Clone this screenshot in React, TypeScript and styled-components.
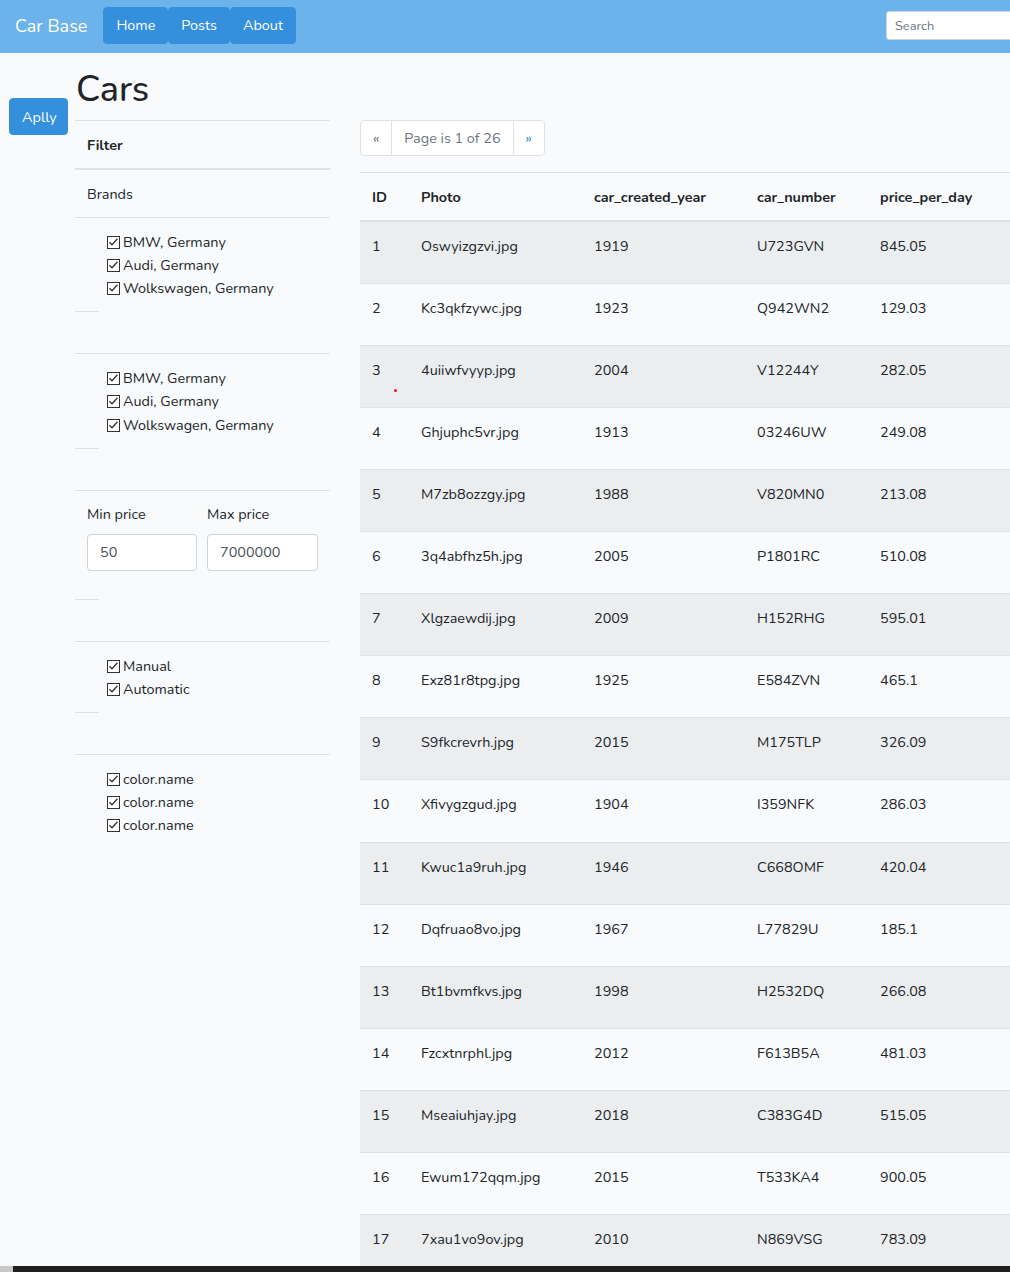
import React from "react";
import styled, { createGlobalStyle } from "styled-components";

const GlobalStyle = createGlobalStyle`
  html, body {
    margin: 0;
    padding: 0;
    overflow: hidden;
    background: #f8fafc;
  }
  body {
    font-family: "Nunito", "Lato", "Open Sans", sans-serif;
    font-size: 14.4px;
    line-height: 1.6;
    color: #212529;
  }
  * { box-sizing: border-box; }
`;

const Page = styled.div`
  width: 1102px;
  min-height: 1272px;
  background: #f8fafc;
`;

const Navbar = styled.nav`
  display: flex;
  align-items: center;
  height: 53px;
  padding: 7px 16px 9px 15px;
  background: #6cb2eb;
`;

const Brand = styled.a`
  font-size: 18px;
  line-height: 1.6;
  color: #fff;
  margin-right: 16px;
  padding-top: 1px;
  text-decoration: none;
`;

const NavGroup = styled.div`
  display: flex;
`;

const NavButton = styled.button`
  height: 37px;
  padding: 6px 12px;
  border: 1px solid #3490dc;
  border-radius: 4px;
  background: #3490dc;
  color: #fff;
  font: inherit;
  font-size: 14.4px;
  line-height: 23px;
`;

const SearchInput = styled.input`
  margin-left: auto;
  width: 200px;
  height: 29px;
  padding: 4px 8px;
  border: 1px solid #ced4da;
  border-radius: 3px;
  background: #fff;
  font: inherit;
  font-size: 12.8px;
  color: #495057;
  &::placeholder { color: #6c757d; }
`;

const Main = styled.div`
  display: flex;
  align-items: flex-start;
  padding-left: 9px;
`;

const ApplyCol = styled.div`
  width: 59px;
  padding-top: 45px;
  margin-right: 7px;
`;

const ApplyButton = styled.button`
  width: 59px;
  height: 37px;
  padding: 7px 12px 5px;
  border: 1px solid #3490dc;
  border-radius: 4px;
  background: #3490dc;
  color: #fff;
  font: inherit;
  font-size: 14.4px;
  line-height: 23px;
`;

const SideCol = styled.div`
  width: 255px;
  padding-top: 15px;
`;

const Title = styled.h1`
  margin: 0 0 9px 1px;
  font-size: 36px;
  font-weight: 500;
  line-height: 1.2;
`;

const FilterHead = styled.div`
  padding: 13px 12px 11px;
  border-top: 1px solid #dee2e6;
  border-bottom: 2px solid #dee2e6;
  font-weight: 700;
`;

const FilterRow = styled.div`
  padding: 13px 12px 11px;
`;

const Section = styled.div`
  padding: 13px 12px 11px;
  border-top: 1px solid #dee2e6;
`;

const Spacer = styled.div`
  height: 42px;
  &::before {
    content: "";
    display: block;
    width: 24px;
    border-top: 1px solid #dee2e6;
  }
`;

const CheckList = styled.ul`
  list-style: none;
  margin: 0;
  padding: 0 0 0 20px;
`;

const CheckItem = styled.li`
  display: flex;
  align-items: center;
  gap: 3px;
  line-height: 1.6;
`;

const PriceGrid = styled.div`
  display: grid;
  grid-template-columns: 110px 111px;
  column-gap: 10px;
  margin-top: -1px;
  margin-bottom: 17px;
`;

const Label = styled.label`
  display: block;
  margin-bottom: 8px;
`;

const PriceInput = styled.input`
  width: 100%;
  height: 37px;
  padding: 6px 12px;
  border: 1px solid #ced4da;
  border-radius: 4px;
  background: #fff;
  font: inherit;
  font-size: 14.4px;
  color: #495057;
`;

const ContentCol = styled.div`
  flex: 1;
  margin-left: 30px;
  padding-top: 67px;
  padding-right: 15px;
`;

const Pager = styled.ul`
  display: flex;
  list-style: none;
  margin: 0 0 16px;
  padding: 0;
`;

const PageItem = styled.li<{ $tone: "muted" | "link" }>`
  height: 36px;
  padding: 8px 12px;
  line-height: 18px;
  border: 1px solid #dee2e6;
  margin-left: -1px;
  background: #fff;
  color: ${(p) => (p.$tone === "link" ? "#3490dc" : "#6c757d")};
  &:first-child { margin-left: 0; border-radius: 4px 0 0 4px; }
  &:last-child { border-radius: 0 4px 4px 0; }
`;

const Table = styled.table`
  width: 100%;
  table-layout: fixed;
  border-collapse: collapse;
`;

const Th = styled.th`
  padding: 13px 12px 11px;
  text-align: left;
  font-weight: 700;
  vertical-align: bottom;
  border-top: 1px solid #dee2e6;
  border-bottom: 2px solid #dee2e6;
`;

const Tr = styled.tr`
  &:nth-child(odd) { background: rgba(0, 0, 0, 0.05); }
`;

const Td = styled.td`
  padding: 13px 12px 25px;
  vertical-align: top;
  border-top: 1px solid #dee2e6;
`;

const CellInner = styled.div`
  position: relative;
`;

const RedDot = styled.span`
  position: absolute;
  left: 22px;
  top: 30px;
  width: 3px;
  height: 3px;
  border-radius: 50%;
  background: #f0141e;
`;

const ScrollTrack = styled.div`
  position: fixed;
  left: 0;
  right: 0;
  bottom: 0;
  height: 6px;
  background: #1f1f1f;
`;

const ScrollThumb = styled.div`
  width: 13px;
  height: 100%;
  background: #c8c8c8;
`;

const CheckBox = () => (
  <svg width="13" height="13" viewBox="0 0 13 13" aria-hidden="true">
    <rect x="0.5" y="0.5" width="12" height="12" fill="#fff" stroke="#333" strokeWidth="1" />
    <polyline points="2.5,6.3 5,8.8 10.5,2.8" fill="none" stroke="#333" strokeWidth="1.3" />
  </svg>
);

const rows: [string, string, string, string][] = [
  ["Oswyizgzvi.jpg", "1919", "U723GVN", "845.05"],
  ["Kc3qkfzywc.jpg", "1923", "Q942WN2", "129.03"],
  ["4uiiwfvyyp.jpg", "2004", "V12244Y", "282.05"],
  ["Ghjuphc5vr.jpg", "1913", "03246UW", "249.08"],
  ["M7zb8ozzgy.jpg", "1988", "V820MN0", "213.08"],
  ["3q4abfhz5h.jpg", "2005", "P1801RC", "510.08"],
  ["Xlgzaewdij.jpg", "2009", "H152RHG", "595.01"],
  ["Exz81r8tpg.jpg", "1925", "E584ZVN", "465.1"],
  ["S9fkcrevrh.jpg", "2015", "M175TLP", "326.09"],
  ["Xfivygzgud.jpg", "1904", "I359NFK", "286.03"],
  ["Kwuc1a9ruh.jpg", "1946", "C668OMF", "420.04"],
  ["Dqfruao8vo.jpg", "1967", "L77829U", "185.1"],
  ["Bt1bvmfkvs.jpg", "1998", "H2532DQ", "266.08"],
  ["Fzcxtnrphl.jpg", "2012", "F613B5A", "481.03"],
  ["Mseaiuhjay.jpg", "2018", "C383G4D", "515.05"],
  ["Ewum172qqm.jpg", "2015", "T533KA4", "900.05"],
  ["7xau1vo9ov.jpg", "2010", "N869VSG", "783.09"],
];

const brands = ["BMW, Germany", "Audi, Germany", "Wolkswagen, Germany"];

const Checks = ({ items }: { items: string[] }) => (
  <CheckList>
    {items.map((t, i) => (
      <CheckItem key={i}>
        <CheckBox />
        <span>{t}</span>
      </CheckItem>
    ))}
  </CheckList>
);

export default function App() {
  return (
    <Page>
      <GlobalStyle />
      <Navbar>
        <Brand>Car Base</Brand>
        <NavGroup>
          <NavButton>Home</NavButton>
          <NavButton>Posts</NavButton>
          <NavButton>About</NavButton>
        </NavGroup>
        <SearchInput placeholder="Search" />
      </Navbar>
      <Main>
        <ApplyCol>
          <ApplyButton>Aplly</ApplyButton>
        </ApplyCol>
        <SideCol>
          <Title>Cars</Title>
          <FilterHead>Filter</FilterHead>
          <FilterRow>Brands</FilterRow>
          <Section>
            <Checks items={brands} />
          </Section>
          <Spacer />
          <Section>
            <Checks items={brands} />
          </Section>
          <Spacer />
          <Section>
            <PriceGrid>
              <div>
                <Label>Min price</Label>
                <PriceInput defaultValue="50" />
              </div>
              <div>
                <Label>Max price</Label>
                <PriceInput defaultValue="7000000" />
              </div>
            </PriceGrid>
          </Section>
          <Spacer />
          <Section>
            <Checks items={["Manual", "Automatic"]} />
          </Section>
          <Spacer />
          <Section>
            <Checks items={["color.name", "color.name", "color.name"]} />
          </Section>
        </SideCol>
        <ContentCol>
          <Pager>
            <PageItem $tone="muted">«</PageItem>
            <PageItem $tone="muted">Page is 1 of 26</PageItem>
            <PageItem $tone="link">»</PageItem>
          </Pager>
          <Table>
            <colgroup>
              <col style={{ width: 49 }} />
              <col style={{ width: 173 }} />
              <col style={{ width: 163 }} />
              <col style={{ width: 123 }} />
              <col />
            </colgroup>
            <thead>
              <tr>
                <Th>ID</Th>
                <Th>Photo</Th>
                <Th>car_created_year</Th>
                <Th>car_number</Th>
                <Th>price_per_day</Th>
              </tr>
            </thead>
            <tbody>
              {rows.map((r, i) => (
                <Tr key={i}>
                  <Td>
                    <CellInner>
                      {i + 1}
                      {i === 2 && <RedDot />}
                    </CellInner>
                  </Td>
                  <Td>{r[0]}</Td>
                  <Td>{r[1]}</Td>
                  <Td>{r[2]}</Td>
                  <Td>{r[3]}</Td>
                </Tr>
              ))}
            </tbody>
          </Table>
        </ContentCol>
      </Main>
      <ScrollTrack>
        <ScrollThumb />
      </ScrollTrack>
    </Page>
  );
}
